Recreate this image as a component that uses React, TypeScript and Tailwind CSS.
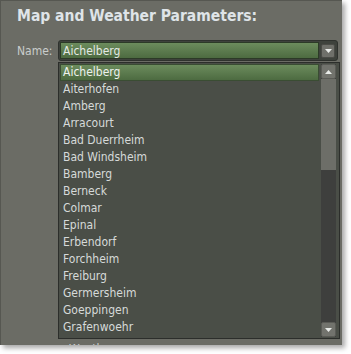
import React from 'react'

const towns = [
  'Aichelberg',
  'Aiterhofen',
  'Amberg',
  'Arracourt',
  'Bad Duerrheim',
  'Bad Windsheim',
  'Bamberg',
  'Berneck',
  'Colmar',
  'Epinal',
  'Erbendorf',
  'Forchheim',
  'Freiburg',
  'Germersheim',
  'Goeppingen',
  'Grafenwoehr',
]

function Arrow({ up }: { up?: boolean }) {
  return (
    <svg width="7" height="4" viewBox="0 0 7 4" className="block">
      {up ? <path d="M0 4 L3.5 0 L7 4 Z" fill="#e8ebe8" /> : <path d="M0 0 L7 0 L3.5 4 Z" fill="#e8ebe8" />}
    </svg>
  )
}

export default function App() {
  const selected = 'Aichelberg'

  return (
    <div
      className="w-[351px] h-[354px] bg-white overflow-hidden"
      style={{ fontFamily: '"DejaVu Sans Condensed", "DejaVu Sans", Verdana, sans-serif' }}
    >
      <div className="w-[342px] h-[345px] bg-[#6b6c65] border-l border-t border-[#565751] shadow-[3px_3px_5px_rgba(0,0,0,0.35)] overflow-hidden flex flex-col">
        <h2 className="pl-[16px] pt-[5px] h-[25px] text-[15.5px] leading-[20px] font-bold text-[#dfe4e8]">
          Map and Weather Parameters:
        </h2>

        <div className="flex items-center mt-[14px] pl-[16px] h-[21px]">
          <span className="w-[41px] text-[12px] leading-[16px] text-[#c9cccc]">Name:</span>
          <div className="flex items-center w-[280px] h-[21px] bg-[#3e423c] border border-[#2f322e] rounded-[3px] p-[1px] gap-[2px]">
            <div className="flex-1 h-full bg-gradient-to-b from-[#6c8c5d] to-[#4d6b41] border border-[#2c3a27] text-[12px] leading-[16px] text-[#e4e9e4] pl-[2px]">
              {selected}
            </div>
            <div className="w-[14px] h-[14px] bg-[#6f706a] border border-[#4a4b46] rounded-[2px] flex items-center justify-center mr-[1px]">
              <Arrow />
            </div>
          </div>
        </div>

        <div className="ml-[57px] mt-[1px] w-[282px] h-[277px] shrink-0 bg-[#4a4e47] border border-[#2c2e2b] flex">
          <ul className="flex-1 pt-[1px] pl-[1px]">
            {towns.map(t => (
              <li
                key={t}
                className={
                  t === selected
                    ? 'h-[17px] pl-[2px] text-[12px] leading-[15px] text-[#eef2ee] bg-gradient-to-b from-[#6c8c5d] to-[#4d6b41] border border-[#3a4d33] mr-[2px]'
                    : 'h-[17px] pl-[3px] text-[12px] leading-[17px] text-[#d6dad9]'
                }
              >
                {t}
              </li>
            ))}
          </ul>
          <div className="w-[15px] bg-[#3e3f3d] flex flex-col mr-[3px] my-[1px]">
            <div className="h-[15px] bg-[#72736d] border border-[#5a5b56] rounded-[2px] flex items-center justify-center">
              <Arrow up />
            </div>
            <div className="h-[91px] bg-[#6d6e68]" />
            <div className="flex-1" />
            <div className="h-[15px] bg-[#72736d] border border-[#5a5b56] rounded-[2px] flex items-center justify-center">
              <Arrow />
            </div>
          </div>
        </div>

        <div className="pl-[68px] pt-[2px] text-[12px] leading-[16px] text-[#c9cccc]">Weather:</div>
      </div>
    </div>
  )
}
